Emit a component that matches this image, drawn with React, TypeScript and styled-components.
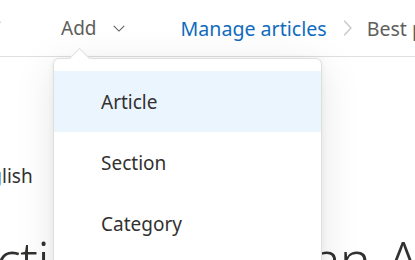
import React, { FunctionComponent } from 'react';
import styled, { createGlobalStyle } from 'styled-components';

const GlobalStyle = createGlobalStyle`
  html, body {
    margin: 0;
    padding: 0;
    background: #ffffff;
    overflow: hidden;
  }
  body {
    font-family: 'Noto Sans', 'Open Sans', sans-serif;
    color: #323130;
  }
`;

const Page = styled.div`
  position: relative;
  width: 415px;
  height: 260px;
  overflow: hidden;
  background: #ffffff;
`;

const TopBar = styled.header`
  display: flex;
  align-items: center;
  height: 56px;
  border-bottom: 1px solid #e1dfdd;
  white-space: nowrap;
`;

const EdgeChevron = styled.span`
  display: flex;
  margin-left: -12px;
  width: 14px;
  margin-top: -8px;
  color: #605e5c;
`;

const AddButton = styled.button`
  display: flex;
  align-items: center;
  gap: 15px;
  margin-left: 59px;
  padding: 0;
  border: none;
  background: none;
  font-family: inherit;
  font-size: 19px;
  color: #605e5c;
  cursor: pointer;
`;

const Crumbs = styled.nav`
  display: flex;
  align-items: center;
  margin-left: 55px;
  gap: 11px;
  font-size: 19.6px;
`;

const CrumbLink = styled.a<{ readonly current?: boolean }>`
  color: ${({ current }) => (current ? '#605e5c' : '#0f6cbd')};
  text-decoration: none;
`;

const Separator = styled.span`
  display: flex;
  color: #c8c6c4;
`;

const Content = styled.main`
  display: flex;
  flex-direction: column;
  margin-left: -32px;
  padding-top: 106px;
`;

const Language = styled.div`
  font-size: 19px;
  line-height: 26px;
`;

const Heading = styled.h1`
  margin: 40px 0 0 -28px;
  font-size: 52px;
  font-weight: 300;
  line-height: 60px;
  white-space: nowrap;
  letter-spacing: -0.5px;
  word-spacing: 4px;
`;

const Menu = styled.div`
  position: absolute;
  left: 53px;
  top: 58px;
  width: 267px;
  height: 230px;
  padding-top: 12px;
  background: #ffffff;
  border: 1px solid #e1dfdd;
  border-radius: 6px;
  box-shadow: 0 8px 40px rgba(0, 0, 0, 0.1), 0 1px 6px rgba(0, 0, 0, 0.06);
  &::before {
    content: '';
    position: absolute;
    left: 18px;
    top: -8px;
    width: 14px;
    height: 14px;
    background: #ffffff;
    border-left: 1px solid #e1dfdd;
    border-top: 1px solid #e1dfdd;
    transform: rotate(45deg);
  }
`;

const MenuItem = styled.div<{ readonly active?: boolean }>`
  display: flex;
  align-items: center;
  height: 61px;
  padding-left: 47px;
  font-size: 19px;
  color: #323130;
  background: ${({ active }) => (active ? '#ebf5fe' : 'transparent')};
`;

const Chevron: FunctionComponent<{ size?: number; dir?: 'down' | 'right' }> = ({ size = 14, dir = 'down' }) => (
  <svg width={size} height={size} viewBox="0 0 16 16" fill="none" stroke="currentColor" strokeWidth="1.2">
    {dir === 'down' ? <path d="M2 5.5l6 6 6-6" /> : <path d="M5.5 1.5l6 6.5-6 6.5" />}
  </svg>
);

const items = ['Article', 'Section', 'Category'];

const App: FunctionComponent = () => (
  <Page>
    <GlobalStyle />
    <TopBar>
      <EdgeChevron>
        <Chevron />
      </EdgeChevron>
      <AddButton>
        Add
        <Chevron />
      </AddButton>
      <Crumbs>
        <CrumbLink href="#">Manage articles</CrumbLink>
        <Separator>
          <Chevron size={18} dir="right" />
        </Separator>
        <CrumbLink current>Best practices</CrumbLink>
      </Crumbs>
    </TopBar>
    <Content>
      <Language>English</Language>
      <Heading>Section title for an Article</Heading>
    </Content>
    <Menu>
      {items.map((item, i) => (
        <MenuItem key={item} active={i === 0}>
          {item}
        </MenuItem>
      ))}
    </Menu>
  </Page>
);

export default App;
